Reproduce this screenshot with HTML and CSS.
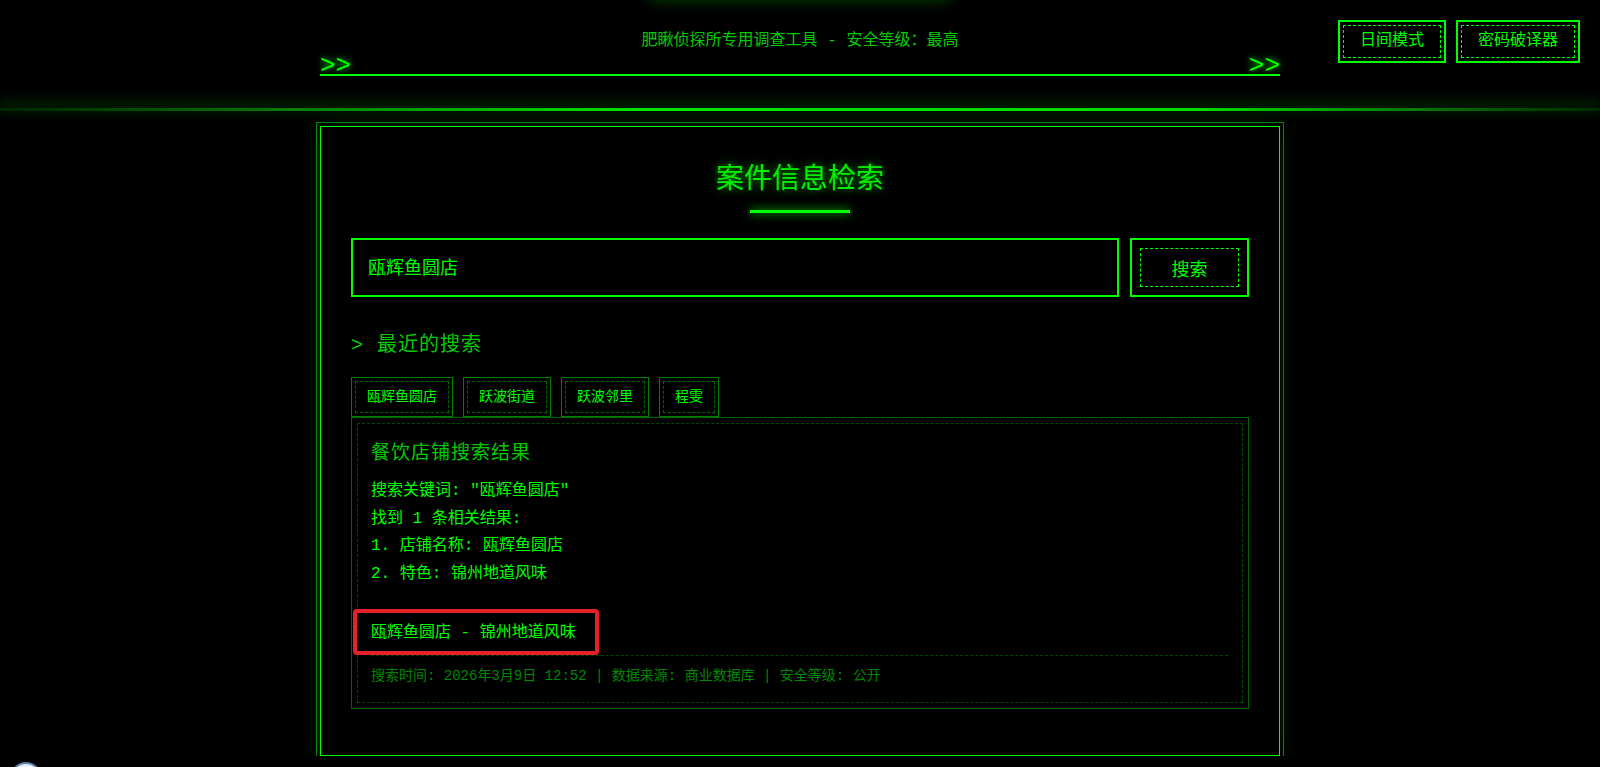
FILE: index.html
```html
<!DOCTYPE html>
<html lang="zh-CN">
<head>
    <meta charset="UTF-8">
    <title>案件信息检索</title>
    <link rel="stylesheet" href="styles.css">
</head>
<body>
    <header class="top-bar">
        <div class="top-inner">
            <p class="subtitle">肥瞅侦探所专用调查工具 - 安全等级：最高</p>
            <div class="arrow-line"><span>&gt;&gt;</span><span>&gt;&gt;</span></div>
        </div>
        <div class="top-actions">
            <button class="frame-btn" type="button"><span>日间模式</span></button>
            <button class="frame-btn" type="button"><span>密码破译器</span></button>
        </div>
    </header>

    <main class="panel">
        <h1 class="panel-title">案件信息检索</h1>
        <div class="title-bar"></div>

        <form class="search-row">
            <input class="search-input" type="text" name="q" value="瓯辉鱼圆店">
            <button class="search-btn" type="submit"><span>搜索</span></button>
        </form>

        <h3 class="recent-title">&gt; 最近的搜索</h3>
        <div class="tags">
            <button class="tag" type="button"><span>瓯辉鱼圆店</span></button>
            <button class="tag" type="button"><span>跃波街道</span></button>
            <button class="tag" type="button"><span>跃波邻里</span></button>
            <button class="tag" type="button"><span>程雯</span></button>
        </div>

        <section class="result">
            <div class="result-inner">
                <h4 class="result-title">餐饮店铺搜索结果</h4>
                <div class="result-lines">
                    <p>搜索关键词: "瓯辉鱼圆店"</p>
                    <p>找到 1 条相关结果:</p>
                    <p>1. 店铺名称: 瓯辉鱼圆店</p>
                    <p>2. 特色: 锦州地道风味</p>
                </div>
                <p class="highlight">瓯辉鱼圆店 - 锦州地道风味</p>
                <div class="result-meta">搜索时间: 2026年3月9日 12:52 | 数据来源: 商业数据库 | 安全等级: 公开</div>
            </div>
        </section>
    </main>

    <div class="float-ball"></div>
</body>
</html>
```

FILE: styles.css
```css
body {
    margin: 0;
    background: #000;
    color: #00ff00;
    font-family: "Liberation Mono", "Noto Sans CJK SC", monospace;
}
button {
    font-family: inherit;
    background: transparent;
    color: #00ff00;
    cursor: pointer;
}

/* header */
.top-bar {
    position: relative;
    height: 111px;
}
.top-bar::before {
    content: "";
    position: absolute;
    top: -10px;
    left: 650px;
    width: 300px;
    height: 12px;
    background: rgba(0, 255, 0, 0.22);
    filter: blur(6px);
}
.top-bar::after {
    content: "";
    position: absolute;
    left: 0;
    right: 0;
    bottom: 0;
    height: 3px;
    background: linear-gradient(90deg, rgba(0,120,0,0.3), #00e600 40%, #00dd00 75%, rgba(0,200,0,0.2));
    box-shadow: 0 -3px 14px 2px rgba(0, 160, 0, 0.35);
}
.top-inner {
    width: 960px;
    margin: 0 auto;
    padding-top: 30px;
}
.subtitle {
    margin: 0;
    font-size: 16px;
    line-height: 22px;
    text-align: center;
    color: #00cc00;
}
.arrow-line {
    display: flex;
    justify-content: space-between;
    align-items: flex-end;
    height: 22px;
    border-bottom: 2px solid #00ff00;
    font-size: 26px;
    line-height: 22px;
    text-shadow: 0 0 6px #00ff00;
}
.arrow-line span {
    position: relative;
    top: 3px;
}
.top-actions {
    position: absolute;
    top: 20px;
    right: 20px;
    display: flex;
    gap: 10px;
}
.frame-btn {
    padding: 3px;
    border: 2px solid #00ff00;
}
.frame-btn span {
    display: block;
    padding: 6px 16px;
    border: 1px dashed #00ff00;
    font-size: 16px;
    line-height: 19px;
}

/* main panel */
.panel {
    box-sizing: border-box;
    width: 960px;
    margin: 15px auto 0;
    padding: 30px 30px 46px;
    border: 1px solid #00ff00;
    outline: 1px solid #008800;
    outline-offset: 3px;
    box-shadow: 0 0 24px rgba(0, 255, 0, 0.12);
}
.panel-title {
    margin: 0;
    padding-top: 4px;
    font-size: 28px;
    font-weight: normal;
    line-height: 40px;
    text-align: center;
    color: #00ee00;
    text-shadow: 0 0 10px rgba(0, 255, 0, 0.6);
}
.title-bar {
    width: 100px;
    height: 3px;
    margin: 9px auto 0;
    background: #00ff00;
    box-shadow: 0 0 10px #00ff00;
}
.search-row {
    display: flex;
    gap: 11px;
    margin-top: 25px;
}
.search-input {
    flex: 1;
    box-sizing: border-box;
    height: 59px;
    padding: 0 15px 3px;
    border: 2px solid #00ff00;
    background: #000;
    color: #00ff00;
    font-family: inherit;
    font-size: 18px;
    outline: none;
}
.search-btn {
    box-sizing: border-box;
    width: 119px;
    height: 59px;
    padding: 8px;
    border: 2px solid #00ff00;
}
.search-btn span {
    display: flex;
    align-items: center;
    justify-content: center;
    height: 100%;
    border: 1px dashed #00ff00;
    box-sizing: border-box;
    font-size: 18px;
}
.recent-title {
    margin: 35px 0 17px;
    font-size: 20px;
    font-weight: normal;
    line-height: 28px;
    letter-spacing: 1px;
    color: #00cc00;
}
.tags {
    display: flex;
    gap: 10px;
}
.tag {
    padding: 3px;
    border: 1px solid #008000;
}
.tag span {
    display: block;
    padding: 6px 11px;
    border: 1px dashed #006400;
    font-size: 14px;
    line-height: 18px;
}

/* results */
.result {
    padding: 5px;
    border: 1px solid #006600;
}
.result-inner {
    padding: 16px 14px 16px 13px;
    border: 1px dashed #004d00;
}
.result-title {
    margin: 0 0 10px;
    font-size: 19px;
    font-weight: normal;
    line-height: 28px;
    letter-spacing: 1px;
    color: #00cc00;
}
.result-lines p {
    margin: 0;
    font-size: 16px;
    line-height: 27.5px;
}
.highlight {
    position: relative;
    margin: 31px 0 8px;
    font-size: 16px;
    line-height: 28px;
}
.highlight::after {
    content: "";
    position: absolute;
    left: -18px;
    top: -10px;
    width: 246px;
    height: 46px;
    box-sizing: border-box;
    border: 4px solid #e8202a;
    border-radius: 4px;
}
.result-meta {
    padding-top: 10px;
    border-top: 1px dashed #004400;
    font-size: 14px;
    line-height: 20px;
    color: #008800;
}

.float-ball {
    position: fixed;
    left: 10px;
    bottom: -27px;
    width: 32px;
    height: 32px;
    box-sizing: border-box;
    border-radius: 50%;
    border: 2px solid #5b7fa6;
    background: #e6edf5;
}
```
